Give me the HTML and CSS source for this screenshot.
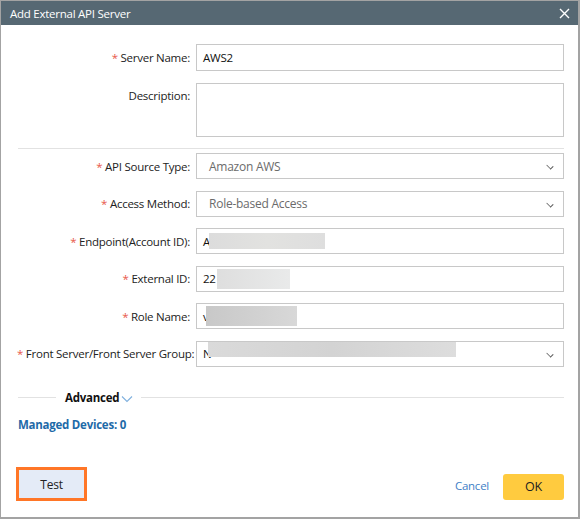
FILE: index.html
```html
<!DOCTYPE html>
<html lang="en">
<head>
	<meta charset="UTF-8">
	<title>Add External API Server</title>
	<link rel="stylesheet" href="styles.css">
</head>
<body>
	<div class="dialog">
		<div class="title">
			<span>Add External API Server</span>
			<a href="#" class="close">
				<svg width="11" height="11" viewBox="0 0 11 11"><path d="M1 1L10 10M10 1L1 10" stroke="#fff" stroke-width="1.4" fill="none"/></svg>
			</a>
		</div>
		<div class="content">
			<div class="row">
				<label><i>*</i> Server Name:</label>
				<div class="field input">AWS2</div>
			</div>
			<div class="row top">
				<label>Description:</label>
				<div class="field area"></div>
			</div>
			<div class="sep"></div>
			<div class="row">
				<label><i>*</i> API Source Type:</label>
				<div class="field select">Amazon AWS<b class="arrow"></b></div>
			</div>
			<div class="row">
				<label><i>*</i> Access Method:</label>
				<div class="field select">Role-based Access<b class="arrow"></b></div>
			</div>
			<div class="row">
				<label><i>*</i> Endpoint(Account ID):</label>
				<div class="field input">A<span class="blur b1"></span></div>
			</div>
			<div class="row">
				<label><i>*</i> External ID:</label>
				<div class="field input">22<span class="blur b2"></span></div>
			</div>
			<div class="row">
				<label><i>*</i> Role Name:</label>
				<div class="field input">v<span class="blur b3"></span></div>
			</div>
			<div class="row">
				<label><i>*</i> Front Server/Front Server Group:</label>
				<div class="field select dark">N<span class="blur b4"></span><b class="arrow"></b></div>
			</div>
			<div class="advanced">
				<span class="line short"></span>
				<span class="adv-text">Advanced</span>
				<svg class="adv-arrow" width="12" height="8" viewBox="0 0 12 8"><path d="M1 1.5L6 6.5L11 1.5" stroke="#7fb0de" stroke-width="1.1" fill="none"/></svg>
				<span class="line"></span>
			</div>
			<a href="#" class="managed">Managed Devices: 0</a>
		</div>
		<div class="footer">
			<a href="#" class="btn-test">Test</a>
			<div class="actions">
				<a href="#" class="cancel">Cancel</a>
				<a href="#" class="btn-ok">OK</a>
			</div>
		</div>
	</div>
</body>
</html>
```

FILE: styles.css
```css
* {
	margin: 0;
	padding: 0;
	box-sizing: border-box;
	text-decoration: none;
}
body {
	font-family: "Open Sans", "Noto Sans", sans-serif;
	font-size: 11.5px;
	letter-spacing: -0.25px;
	color: #333;
	background: #fff;
}
.dialog {
	width: 580px;
	height: 519px;
	border: 1px solid #a3a3a3;
	border-bottom-width: 2px;
	border-right-width: 2px;
	display: flex;
	flex-direction: column;
}
.title {
	height: 24px;
	background-color: #566873;
	color: #fff;
	display: flex;
	align-items: center;
	justify-content: space-between;
	padding: 0 8px 0 9px;
	font-size: 11.5px;
}
.close {
	display: flex;
}
.content {
	padding: 19px 14px 0 16px;
	display: flex;
	flex-direction: column;
	gap: 11.5px;
}
.row {
	display: flex;
	align-items: center;
}
.row.top {
	align-items: flex-start;
}
.row.top label {
	padding-top: 5px;
}
.row label {
	width: 179px;
	text-align: right;
	padding-right: 6px;
	color: #222;
	white-space: nowrap;
}
.row label i {
	font-style: normal;
	color: #e8584b;
}
.field {
	flex: 1;
	height: 26px;
	border: 1px solid #c8c8c8;
	display: flex;
	align-items: center;
	padding-left: 6px;
	color: #111;
	position: relative;
}
.row:first-child .field {
	height: 27px;
}
.field.area {
	height: 54px;
}
.field.select {
	padding-left: 12px;
	color: #6b6b6b;
	font-size: 12px;
}
.field.select.dark {
	padding-left: 6px;
	color: #111;
	font-size: 11.5px;
}
.arrow {
	position: absolute;
	right: 10px;
	top: 9px;
	width: 6px;
	height: 6px;
	border-right: 1px solid #555;
	border-bottom: 1px solid #555;
	transform: rotate(45deg) scaleY(0.7);
}
.blur {
	display: inline-block;
	height: 16px;
	background: linear-gradient(to right, #dcdcdc, #e2e2e0, #dedede);
}
.b1 { width: 116px; margin-left: -1px; }
.b2 { width: 73px; height: 20px; margin-left: 1px; background: linear-gradient(to right, #dedede, #e9eaea); }
.b3 { width: 91px; height: 20px; margin-left: -3px; background: linear-gradient(to right, #c8c8c8, #d8d8d8); }
.b4 { width: 248px; height: 15px; margin-top: -8px; margin-left: -3px; background: linear-gradient(to right, #dadada, #d3d3d3, #dddddd); }
.sep {
	height: 1px;
	background: #e2e2e2;
	margin: 0 0 -7.5px 1px;
}
.advanced {
	display: flex;
	align-items: center;
	margin-top: 12px;
	padding-left: 1px;
}
.line {
	flex: 1;
	height: 1px;
	background: #e2e2e2;
}
.line.short {
	flex: none;
	width: 38px;
}
.adv-text {
	font-weight: bold;
	color: #111;
	margin-left: 9px;
}
.adv-arrow {
	margin: 2px 8px 0 2px;
}
.managed {
	font-weight: bold;
	color: #1e6aa8;
	padding-left: 1px;
	margin-top: 0;
}
.footer {
	margin-top: auto;
	display: flex;
	align-items: center;
	justify-content: space-between;
	padding: 0 14px 16px 15px;
}
.btn-test {
	width: 71px;
	height: 34px;
	border: 3px solid #ff7627;
	background: #e4ebf7;
	color: #222;
	display: flex;
	align-items: center;
	justify-content: center;
	font-size: 12px;
	margin-top: -3px;
}
.actions {
	display: flex;
	align-items: center;
	gap: 14px;
}
.cancel {
	color: #3e80c6;
	font-size: 11.5px;
}
.btn-ok {
	width: 61px;
	height: 26px;
	background: #ffcb3f;
	border-radius: 3px;
	color: #222;
	font-size: 12.5px;
	display: flex;
	align-items: center;
	justify-content: center;
	margin-top: 2px;
}
```
